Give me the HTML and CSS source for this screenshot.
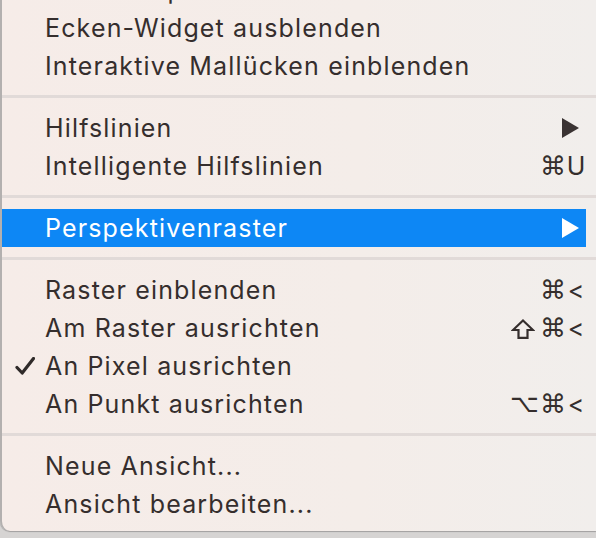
FILE: index.html
```html
<!DOCTYPE html>
<html lang="de">
<head>
<meta charset="utf-8">
<title>Ansicht</title>
<link rel="stylesheet" href="styles.css">
</head>
<body>
<div class="menu">
  <div class="row"><span class="check"></span><span class="label">Verlaufsoptimierer ausblenden</span><span class="sc"><span class="k mod">⌥</span><span class="k cmd">⌘</span><span class="k last">G</span></span></div>
  <div class="row"><span class="check"></span><span class="label">Ecken-Widget ausblenden</span></div>
  <div class="row"><span class="check"></span><span class="label">Interaktive Mallücken einblenden</span></div>
  <div class="sep"></div>
  <div class="row"><span class="check"></span><span class="label">Hilfslinien</span><span class="arrow"></span></div>
  <div class="row"><span class="check"></span><span class="label">Intelligente Hilfslinien</span><span class="sc"><span class="k cmd">⌘</span><span class="k last">U</span></span></div>
  <div class="sep"></div>
  <div class="row active"><span class="check"></span><span class="label">Perspektivenraster</span><span class="arrow"></span></div>
  <div class="sep"></div>
  <div class="row"><span class="check"></span><span class="label">Raster einblenden</span><span class="sc"><span class="k cmd">⌘</span><span class="k last">&lt;</span></span></div>
  <div class="row"><span class="check"></span><span class="label">Am Raster ausrichten</span><span class="sc"><span class="k mod shift" title="⇧"><svg viewBox="0 0 24 20" width="24" height="20"><path d="M12 1.5 L22 11 L16.5 11 L16.5 18.8 L7.5 18.8 L7.5 11 L2 11 Z" fill="none" stroke="currentColor" stroke-width="2.2" stroke-linejoin="miter"/></svg></span><span class="k cmd">⌘</span><span class="k last">&lt;</span></span></div>
  <div class="row"><span class="check"><svg class="tick" viewBox="0 0 20 18" width="20" height="18"><path d="M2 10.5 L7.2 16 L18.5 1.5" fill="none" stroke="currentColor" stroke-width="3.2" stroke-linecap="round" stroke-linejoin="round"/></svg></span><span class="label">An Pixel ausrichten</span></div>
  <div class="row"><span class="check"></span><span class="label">An Punkt ausrichten</span><span class="sc"><span class="k mod">⌥</span><span class="k cmd">⌘</span><span class="k last">&lt;</span></span></div>
  <div class="sep"></div>
  <div class="row"><span class="check"></span><span class="label">Neue Ansicht...</span></div>
  <div class="row"><span class="check"></span><span class="label">Ansicht bearbeiten...</span></div>
</div>
</body>
</html>
```

FILE: styles.css
```css
html, body {
  margin: 0;
  padding: 0;
}
body {
  width: 596px;
  height: 538px;
  overflow: hidden;
  background: #d6d4d3;
  font-family: Inter, "Liberation Sans", sans-serif;
  color: #352e2d;
}
.menu {
  margin-top: -29px;
  border-left: 2px solid #b3b0af;
  border-bottom-left-radius: 10px;
  background: linear-gradient(90deg, #f6ece8 0%, #f4ede9 60%, #f1eeec 100%);
  box-shadow: 0 1px 1px rgba(0, 0, 0, 0.25);
  padding-bottom: 8px;
}
.row {
  display: flex;
  align-items: center;
  height: 38px;
  margin-right: 10px;
  padding-left: 13px;
  font-size: 25px;
  line-height: 38px;
}
.row.active {
  background: #0d87f5;
  color: #ffffff;
}
.check {
  width: 30px;
  flex: none;
  display: flex;
  align-items: center;
}
.tick {
  display: block;
  color: #2f2a29;
}
.label {
  flex: 1;
  white-space: nowrap;
  letter-spacing: 1.15px;
}
.arrow {
  width: 0;
  height: 0;
  border-top: 10px solid transparent;
  border-bottom: 10px solid transparent;
  border-left: 17px solid #3a3333;
  margin-right: 7px;
}
.row.active .arrow {
  border-left-color: #ffffff;
}
.sc {
  display: flex;
  align-items: center;
}
.k {
  display: block;
  text-align: center;
}
.mod {
  width: 26px;
  margin-right: 4px;
  font-family: "DejaVu Sans", sans-serif;
  font-size: 25px;
}
.mod.shift {
  display: flex;
  justify-content: center;
  align-items: center;
  height: 38px;
  padding-top: 1px;
  box-sizing: border-box;
}
.mod.shift svg {
  display: block;
}
.cmd {
  width: 23px;
  margin-right: 3px;
  font-family: "DejaVu Sans", sans-serif;
  font-size: 26px;
}
.last {
  width: 20px;
}
.sep {
  height: 3px;
  margin: 10px 0 11px;
  background: #e1dad8;
}
```
